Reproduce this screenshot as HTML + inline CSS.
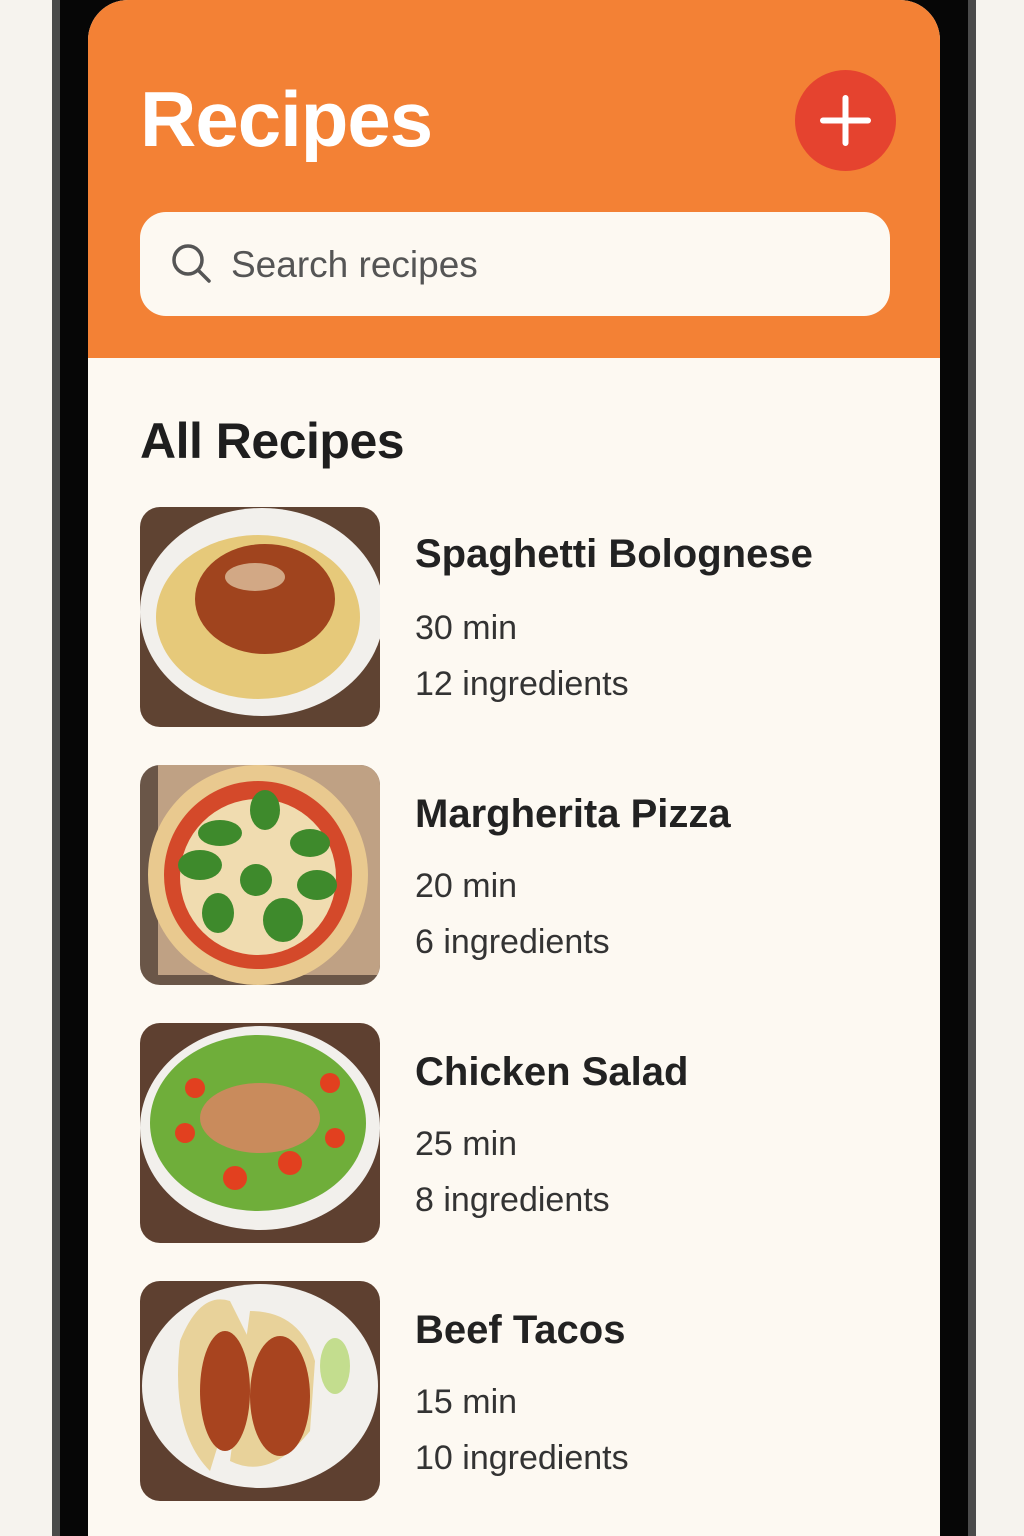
<!DOCTYPE html>
<html><head><meta charset="utf-8"><style>
*{margin:0;padding:0;box-sizing:border-box}
html,body{width:1024px;height:1536px;overflow:hidden}
body{background:#f6f3ee;position:relative;font-family:"Liberation Sans",sans-serif}
.wrap{position:absolute;left:0;top:0;width:1024px;height:1536px;overflow:hidden}
.frame{position:absolute;left:52px;top:0;width:924px;height:1536px;border-radius:0;background:#4a4a4a}
.bezel{position:absolute;left:60px;top:0;width:908px;height:1536px;background:#060606}
.screen{position:absolute;left:88px;top:0;width:852px;height:1536px;border-radius:40px 40px 0 0;background:#fdf9f2;overflow:hidden}
.hdr{position:absolute;left:0;top:0;width:852px;height:358px;background:#f38135}
.abs{position:absolute}
.title{left:52px;top:74px;font-size:78px;font-weight:bold;color:#fff;letter-spacing:-1px}
.plus{left:707px;top:70px;width:101px;height:101px;border-radius:50%;background:#e5432f}
.search{left:52px;top:212px;width:750px;height:104px;border-radius:26px;background:#fdf9f2}
.sx{left:143px;top:244px;font-size:37px;color:#555}
h2{position:absolute;left:52px;top:412px;font-size:50px;font-weight:bold;color:#1e1e1e;letter-spacing:-0.5px}
.img{position:absolute;left:52px;width:240px;height:220px;border-radius:20px;overflow:hidden}
.t{position:absolute;left:327px;font-size:40px;font-weight:bold;color:#222}
.m{position:absolute;left:327px;font-size:34px;color:#333}
</style></head><body><div class="wrap">
<div class="frame"></div><div class="bezel"></div>
<div class="screen">
<div class="hdr"></div>
<div class="abs title">Recipes</div>
<div class="abs plus"><svg width="101" height="101"><path d="M50.5 28v45M28 50.5h45" stroke="#fff" stroke-width="6" stroke-linecap="round"/></svg></div>
<div class="abs search"><svg class="abs" style="left:30px;top:30px" width="44" height="44"><circle cx="18" cy="18" r="14" fill="none" stroke="#555" stroke-width="3.5"/><path d="M28 28l11 11" stroke="#555" stroke-width="3.5" stroke-linecap="round"/></svg></div>
<div class="abs sx">Search recipes</div>
<h2>All Recipes</h2>

<div class="img" style="top:507px"><svg width="240" height="220"><rect width="240" height="220" fill="#5f4332"/><ellipse cx="122" cy="105" rx="122" ry="104" fill="#f2f0ec"/><ellipse cx="118" cy="110" rx="102" ry="82" fill="#e6c97a"/><ellipse cx="125" cy="92" rx="70" ry="55" fill="#a0441e"/><ellipse cx="115" cy="70" rx="30" ry="14" fill="#e7d3b0" opacity=".7"/></svg></div>
<div class="t" style="top:532px">Spaghetti Bolognese</div>
<div class="m" style="top:609px">30 min</div>
<div class="m" style="top:665px">12 ingredients</div>

<div class="img" style="top:765px"><svg width="240" height="220"><rect width="240" height="220" fill="#6a5648"/><rect x="18" y="0" width="222" height="210" fill="#bfa184"/><circle cx="118" cy="110" r="110" fill="#e9c98f"/><circle cx="118" cy="110" r="94" fill="#d4492a"/><circle cx="118" cy="112" r="78" fill="#f0dcb0"/><g fill="#3e8a2c"><ellipse cx="125" cy="45" rx="15" ry="20"/><ellipse cx="80" cy="68" rx="22" ry="13"/><ellipse cx="170" cy="78" rx="20" ry="14"/><ellipse cx="60" cy="100" rx="22" ry="15"/><ellipse cx="116" cy="115" rx="16" ry="16"/><ellipse cx="177" cy="120" rx="20" ry="15"/><ellipse cx="78" cy="148" rx="16" ry="20"/><ellipse cx="143" cy="155" rx="20" ry="22"/></g></svg></div>
<div class="t" style="top:792px">Margherita Pizza</div>
<div class="m" style="top:867px">20 min</div>
<div class="m" style="top:923px">6 ingredients</div>

<div class="img" style="top:1023px"><svg width="240" height="220"><rect width="240" height="220" fill="#5e4030"/><ellipse cx="120" cy="105" rx="120" ry="102" fill="#f2f0ec"/><ellipse cx="118" cy="100" rx="108" ry="88" fill="#6fae3a"/><ellipse cx="120" cy="95" rx="60" ry="35" fill="#c98b5c"/><g fill="#e2401f"><circle cx="55" cy="65" r="10"/><circle cx="190" cy="60" r="10"/><circle cx="45" cy="110" r="10"/><circle cx="150" cy="140" r="12"/><circle cx="95" cy="155" r="12"/><circle cx="195" cy="115" r="10"/></g></svg></div>
<div class="t" style="top:1050px">Chicken Salad</div>
<div class="m" style="top:1125px">25 min</div>
<div class="m" style="top:1181px">8 ingredients</div>

<div class="img" style="top:1281px"><svg width="240" height="220"><rect width="240" height="220" fill="#5e4030"/><ellipse cx="120" cy="105" rx="118" ry="102" fill="#f2f0ec"/><path d="M40 60Q60 10 90 20L110 60 70 190Q30 150 40 60Z" fill="#e8d29a"/><path d="M110 30Q160 30 175 80L170 150Q130 200 90 180Z" fill="#e8d29a"/><ellipse cx="85" cy="110" rx="25" ry="60" fill="#a8441f"/><ellipse cx="140" cy="115" rx="30" ry="60" fill="#a8441f"/><ellipse cx="195" cy="85" rx="15" ry="28" fill="#c3dd8e"/></svg></div>
<div class="t" style="top:1308px">Beef Tacos</div>
<div class="m" style="top:1383px">15 min</div>
<div class="m" style="top:1439px">10 ingredients</div>
</div>
</div></body></html>
